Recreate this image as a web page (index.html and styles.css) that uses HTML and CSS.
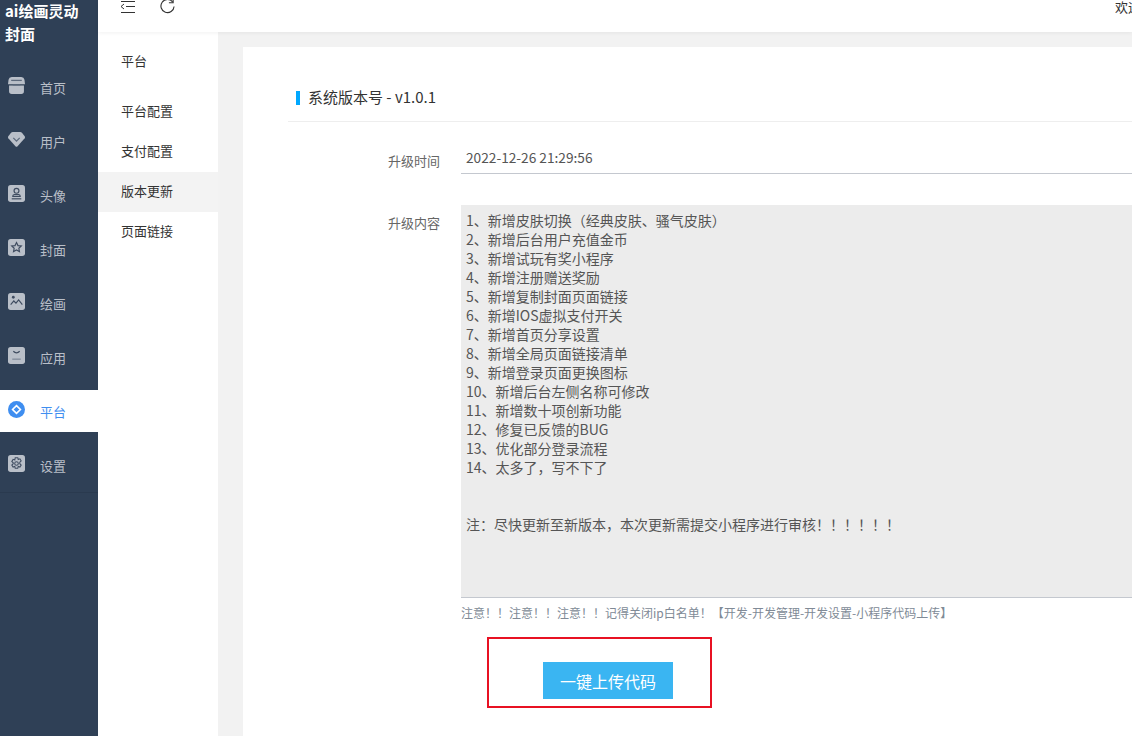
FILE: index.html
```html
<!DOCTYPE html>
<html lang="zh-CN">
<head>
<meta charset="utf-8">
<title>版本更新</title>
<link rel="stylesheet" href="styles.css">
</head>
<body>
<div class="app">
  <aside class="sidebar">
    <div class="brand">ai绘画灵动封面</div>
    <nav class="menu">
      <a class="menu-item"><svg class="ico" viewBox="0 0 16 16"><path d="M3.500 0h9Q15 0 15.500 2.500L16 6.800H0L.5 2.500Q1 0 3.500 0zM1 8h14v5.500Q15 16 12.500 16h-9Q1 16 1 13.500z" fill="#b9bfc8"/><path d="M3 3.200h10" stroke="#5d6a7c" stroke-width="1.200"/><path d="M4.500 7.500h7" stroke="#5d6a7c" stroke-width="1"/></svg><span>首页</span></a>
      <a class="menu-item"><svg class="ico" viewBox="0 0 16 16"><path d="M4.500 1h7q1 0 1.800.8l2.400 3.200q.6 1 0 1.800L9 14.300q-1 1-2 0L.3 6.800q-.6-.8 0-1.800l2.400-3.200Q3.500 1 4.500 1z" fill="#b9bfc8"/><path d="M5 6.500l3 3 3-3" fill="none" stroke="#5d6a7c" stroke-width="1.200"/></svg><span>用户</span></a>
      <a class="menu-item"><svg class="ico" viewBox="0 0 16 16"><rect width="16" height="16" rx="2.500" fill="#b9bfc8"/><circle cx="8" cy="5.500" r="2.300" fill="none" stroke="#3f4c60" stroke-width="1.100"/><path d="M4.500 10.800v-.3q0-1 1.500-1.500h4q1.500.5 1.500 1.500v.3z" fill="none" stroke="#3f4c60" stroke-width="1.100"/><path d="M3.500 13h9" stroke="#3f4c60" stroke-width="1.100"/></svg><span>头像</span></a>
      <a class="menu-item"><svg class="ico" viewBox="0 0 16 16"><rect width="16" height="16" rx="2.500" fill="#b9bfc8"/><path d="M8 3.300l1.400 2.900 3.100.4-2.300 2.100.6 3.100L8 10.300l-2.800 1.500.6-3.100-2.300-2.100 3.100-.4z" fill="none" stroke="#3f4c60" stroke-width="1.100"/></svg><span>封面</span></a>
      <a class="menu-item"><svg class="ico" viewBox="0 0 16 16"><rect width="16" height="16" rx="2.500" fill="#b9bfc8"/><circle cx="5" cy="4" r="1.300" fill="#3f4c60"/><path d="M2.500 11l3-3.500 2 2L10 6.500l3.500 4.500" fill="none" stroke="#3f4c60" stroke-width="1.100"/></svg><span>绘画</span></a>
      <a class="menu-item"><svg class="ico" viewBox="0 0 16 16"><rect width="16" height="16" rx="2.500" fill="#b9bfc8"/><path d="M5 4q3 3 6 0" fill="none" stroke="#3f4c60" stroke-width="1.100"/><path d="M4 11.500h8" stroke="#8b94a2" stroke-width="1.500"/></svg><span>应用</span></a>
      <a class="menu-item active"><svg class="ico" viewBox="0 0 16 16"><circle cx="8" cy="8" r="8" fill="#3f8ef0"/><path d="M8 4.300L11.700 8 8 11.700 4.300 8z" fill="none" stroke="#fff" stroke-width="1.500"/></svg><span>平台</span></a>
      <a class="menu-item"><svg class="ico" viewBox="0 0 16 16"><rect width="16" height="16" rx="2.500" fill="#b9bfc8"/><path d="M6.800 2.500h2.400l.4 1.700 1.600-.6 1.200 2-1.300 1.200v1.400l1.300 1.200-1.200 2-1.600-.6-.4 1.700H6.800l-.4-1.700-1.600.6-1.200-2 1.300-1.200V7.300L3.600 6.100l1.200-2 1.600.6z" fill="none" stroke="#3f4c60" stroke-width="1"/><circle cx="8" cy="8" r="1.700" fill="none" stroke="#3f4c60" stroke-width="1"/></svg><span>设置</span></a>
    </nav>
  </aside>
  <div class="main">
    <header class="topbar">
      <div class="tools">
        <svg class="tool" viewBox="0 0 15 15"><path d="M1 2.500h14M6 7.500h9M1 13.500h14" fill="none" stroke="#333" stroke-width="1"/><path d="M4 5L1 7.500 4 10" fill="none" stroke="#333" stroke-width="1"/></svg>
        <svg class="tool" viewBox="0 0 16 16"><path d="M13.500 3.200A7 7 0 1 0 15 8" fill="none" stroke="#333" stroke-width="1.200"/><path d="M14 -0.500v4.500H9.500" fill="none" stroke="#333" stroke-width="1.200"/></svg>
      </div>
      <div class="welcome">欢迎您</div>
    </header>
    <div class="body">
      <nav class="subnav">
        <div class="subnav-title">平台</div>
        <a class="subnav-item">平台配置</a>
        <a class="subnav-item">支付配置</a>
        <a class="subnav-item current">版本更新</a>
        <a class="subnav-item">页面链接</a>
      </nav>
      <main class="content">
        <section class="card">
          <h2 class="card-title">系统版本号 - v1.0.1</h2>
          <div class="field field-time">
            <label class="field-label">升级时间</label>
            <div class="field-value">2022-12-26 21:29:56</div>
          </div>
          <div class="field">
            <label class="field-label label-text">升级内容</label>
            <div class="field-control">
              <div class="notes">1、新增皮肤切换（经典皮肤、骚气皮肤）
2、新增后台用户充值金币
3、新增试玩有奖小程序
4、新增注册赠送奖励
5、新增复制封面页面链接
6、新增IOS虚拟支付开关
7、新增首页分享设置
8、新增全局页面链接清单
9、新增登录页面更换图标
10、新增后台左侧名称可修改
11、新增数十项创新功能
12、修复已反馈的BUG
13、优化部分登录流程
14、太多了，写不下了


注：尽快更新至新版本，本次更新需提交小程序进行审核！！！！！！</div>
              <p class="hint">注意！！注意！！注意！！记得关闭ip白名单！【开发-开发管理-开发设置-小程序代码上传】</p>
              <div class="actions">
                <button class="upload" type="button">一键上传代码</button>
                <div class="annotation"></div>
              </div>
            </div>
          </div>
        </section>
      </main>
    </div>
  </div>
</div>
</body>
</html>
```
FILE: styles.css
```css
* { box-sizing: border-box; }
html, body { margin: 0; height: 100%; overflow: hidden; }
body { font-family: "Noto Sans CJK SC", "Open Sans", sans-serif; font-size: 13px; color: #333; background: #fff; }
.app { display: flex; width: 1132px; height: 736px; overflow: hidden; }

.sidebar { width: 98px; flex: none; background: #2f4056; color: #c2c6cc; }
.brand { height: 65px; padding: 0 10px 0 5px; margin-top: -1px; font-size: 15px; font-weight: 700; line-height: 23px; color: #fff; }
.menu { display: flex; flex-direction: column; gap: 12px; height: 427px; margin-top: 2px; border-bottom: 1px solid #2a3a4f; }
.menu-item { display: flex; align-items: center; gap: 15px; height: 42px; flex: none; padding-left: 8px; font-size: 13px; color: #b9bfc8; }
.menu-item .ico { width: 17px; height: 17px; flex: none; margin-top: -4px; }
.menu-item.active { background: #fff; color: #3f8ef0; }

.main { flex: 1; min-width: 0; display: flex; flex-direction: column; }
.topbar { height: 32px; flex: none; display: flex; justify-content: space-between; background: #fff; box-shadow: 0 1px 4px rgba(0,0,0,.06); position: relative; z-index: 1; padding-left: 22px; }
.tools { display: flex; gap: 25px; align-items: flex-start; margin-top: -1px; }
.tool { width: 15px; height: 15px; }
.welcome { font-size: 13px; line-height: 13px; white-space: nowrap; width: 17px; overflow: hidden; }

.body { flex: 1; display: flex; min-height: 0; }
.subnav { width: 120px; flex: none; background: #fff; padding-top: 19px; }
.subnav-title { height: 41px; line-height: 20px; padding-left: 23px; color: #333; }
.subnav-item { display: block; height: 40px; line-height: 38px; padding-left: 23px; color: #333; }
.subnav-item.current { background: #f3f3f3; }

.content { flex: 1; min-width: 0; background: #f2f2f2; padding: 15px 0 0 25px; }
.card { background: #fff; height: 100%; padding-left: 45px; overflow: hidden; }
.card-title { position: relative; height: 75px; margin: 0; padding: 32px 0 0 20px; font-size: 15px; font-weight: 400; line-height: 36px; border-bottom: 1px solid #eee; color: #333; }
.card-title::before { content: ""; position: absolute; left: 8px; top: 44px; width: 4px; height: 14px; background: #00a8ff; }
.field { display: flex; }
.field-time { margin-top: 13px; }
.field-label { width: 152px; flex: none; text-align: right; color: #666; }
.field-time .field-label { height: 39px; line-height: 51px; }
.label-text { line-height: 36px; }
.field-value { flex: 1; min-width: 0; height: 39px; margin-left: 21px; padding-left: 5px; font-size: 13.7px; line-height: 44px; border-bottom: 1px solid #c4c8cf; color: #555; white-space: nowrap; }
.field + .field { margin-top: 31px; }
.field-control { flex: 1; min-width: 0; margin-left: 21px; }
.notes { height: 393px; padding: 6px 5px; background: #ececec; border-bottom: 1px solid #c4c8cf; font-size: 14px; line-height: 19px; white-space: pre-wrap; color: #555; }
.hint { margin: 6px 0 0; font-size: 12px; line-height: 17px; color: #808a96; white-space: nowrap; }
.actions { position: relative; padding: 41px 0 0 82px; }
.upload { display: block; width: 130px; height: 37px; padding: 0; border: 0; background: #3ab5f2; color: #fff; font-family: inherit; font-size: 16px; }
.annotation { position: absolute; left: 26px; top: 16px; width: 225px; height: 71px; border: 2px solid #e81123; pointer-events: none; }
```
